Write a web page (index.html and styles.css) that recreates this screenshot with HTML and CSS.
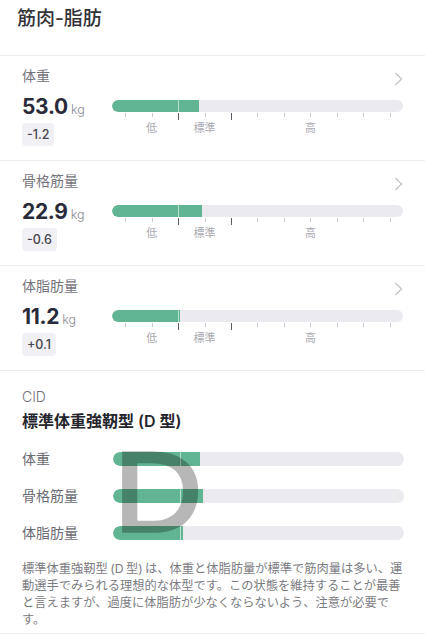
FILE: index.html
```html
<!DOCTYPE html>
<html lang="ja">
<head>
<meta charset="utf-8">
<title>筋肉-脂肪</title>
<link rel="stylesheet" href="styles.css">
</head>
<body>
<header class="page-head">
  <h1 class="page-title">筋肉-脂肪</h1>
</header>

<section class="metric">
  <div class="metric-head">
    <span class="metric-label">体重</span>
    <svg class="chev" width="9" height="14" viewBox="0 0 9 14"><polyline points="1.5,1 7.5,7 1.5,13"/></svg>
  </div>
  <div class="metric-body">
    <div class="metric-value">
      <div class="value"><span class="num">53.0</span><span class="unit">kg</span></div>
      <span class="delta">-1.2</span>
    </div>
    <div class="gauge">
      <div class="track"><div class="fill" style="width:29.9%"></div><div class="mark"></div></div>
      <div class="scale">
        <i class="tick"></i><i class="tick"></i><i class="tick long"></i><i class="tick"></i><i class="tick long"></i><i class="tick"></i><i class="tick"></i><i class="tick"></i><i class="tick"></i><i class="tick"></i><i class="tick"></i>
        <span class="lbl lbl-low">低</span><span class="lbl lbl-std">標準</span><span class="lbl lbl-high">高</span>
      </div>
    </div>
  </div>
</section>

<section class="metric">
  <div class="metric-head">
    <span class="metric-label">骨格筋量</span>
    <svg class="chev" width="9" height="14" viewBox="0 0 9 14"><polyline points="1.5,1 7.5,7 1.5,13"/></svg>
  </div>
  <div class="metric-body">
    <div class="metric-value">
      <div class="value"><span class="num">22.9</span><span class="unit">kg</span></div>
      <span class="delta">-0.6</span>
    </div>
    <div class="gauge">
      <div class="track"><div class="fill" style="width:30.9%"></div><div class="mark"></div></div>
      <div class="scale">
        <i class="tick"></i><i class="tick"></i><i class="tick long"></i><i class="tick"></i><i class="tick long"></i><i class="tick"></i><i class="tick"></i><i class="tick"></i><i class="tick"></i><i class="tick"></i><i class="tick"></i>
        <span class="lbl lbl-low">低</span><span class="lbl lbl-std">標準</span><span class="lbl lbl-high">高</span>
      </div>
    </div>
  </div>
</section>

<section class="metric">
  <div class="metric-head">
    <span class="metric-label">体脂肪量</span>
    <svg class="chev" width="9" height="14" viewBox="0 0 9 14"><polyline points="1.5,1 7.5,7 1.5,13"/></svg>
  </div>
  <div class="metric-body">
    <div class="metric-value">
      <div class="value"><span class="num">11.2</span><span class="unit">kg</span></div>
      <span class="delta">+0.1</span>
    </div>
    <div class="gauge">
      <div class="track"><div class="fill" style="width:23.3%"></div><div class="mark"></div></div>
      <div class="scale">
        <i class="tick"></i><i class="tick"></i><i class="tick long"></i><i class="tick"></i><i class="tick long"></i><i class="tick"></i><i class="tick"></i><i class="tick"></i><i class="tick"></i><i class="tick"></i><i class="tick"></i>
        <span class="lbl lbl-low">低</span><span class="lbl lbl-std">標準</span><span class="lbl lbl-high">高</span>
      </div>
    </div>
  </div>
</section>

<section class="cid">
  <div class="cid-kicker">CID</div>
  <h2 class="cid-title">標準体重強靭型 (D 型)</h2>
  <div class="cid-chart">
    <div class="cid-row"><span class="cid-label">体重</span><div class="track big"><div class="fill" style="width:30%"></div><div class="mark"></div></div></div>
    <div class="cid-row"><span class="cid-label">骨格筋量</span><div class="track big"><div class="fill" style="width:31%"></div><div class="mark"></div></div></div>
    <div class="cid-row"><span class="cid-label">体脂肪量</span><div class="track big"><div class="fill" style="width:24.1%"></div><div class="mark"></div></div></div>
    <span class="cid-letter">D</span>
  </div>
  <p class="cid-desc">標準体重強靭型 (D 型) は、体重と体脂肪量が標準で筋肉量は多い、運動選手でみられる理想的な体型です。この状態を維持することが最善と言えますが、過度に体脂肪が少なくならないよう、注意が必要です。</p>
</section>
</body>
</html>
```

FILE: styles.css
```css
* { box-sizing: border-box; }

html, body {
  margin: 0;
  padding: 0;
  background: #ffffff;
}

body {
  width: 425px;
  font-family: "Inter", "Noto Sans CJK JP", sans-serif;
  color: #2b2b33;
  overflow: hidden;
}

.page-head {
  height: 56px;
  padding: 6px 17px 0;
  border-bottom: 1px solid #eeeef1;
}

.page-title {
  margin: 0;
  font-size: 19px;
  line-height: 26px;
  font-weight: 500;
  color: #333338;
}

.metric {
  padding: 10px 22px 14px;
  border-bottom: 1px solid #eeeef1;
}

.metric-head {
  display: flex;
  justify-content: space-between;
  align-items: flex-start;
}

.metric-label {
  font-size: 14px;
  line-height: 20px;
  color: #75757c;
}

.chev {
  margin-top: 6px;
  fill: none;
  stroke: #c5c5ca;
  stroke-width: 1.3;
}

.metric-body {
  display: flex;
  margin-top: 11px;
}

.metric-value {
  width: 90px;
  flex: none;
  display: flex;
  flex-direction: column;
  align-items: flex-start;
}

.value {
  height: 20px;
  line-height: 20px;
  white-space: nowrap;
}

.num {
  font-size: 21px;
  font-weight: 700;
  color: #2a2b3a;
  letter-spacing: -0.3px;
}

.unit {
  margin-left: 3px;
  font-size: 12.5px;
  font-weight: 300;
  color: #8a8a92;
}

.delta {
  margin-top: 6px;
  height: 23px;
  padding: 0 5px;
  border-radius: 4px;
  background: #f1f1f5;
  font-size: 12.5px;
  line-height: 23px;
  font-weight: 500;
  color: #45454d;
}

.gauge {
  flex: 1;
  padding-top: 3px;
}

.track {
  position: relative;
  height: 12px;
  border-radius: 6px;
  background: #ebebef;
  overflow: hidden;
}

.track.big {
  height: 14px;
  border-radius: 7px;
}

.fill {
  height: 100%;
  background: #62b592;
  border-radius: 7px 0 0 7px;
}

.mark {
  position: absolute;
  top: 0;
  bottom: 0;
  left: 22.7%;
  width: 1px;
  background: rgba(255, 255, 255, 0.55);
}

.track.big .mark {
  left: 23.1%;
}

.scale {
  display: grid;
  grid-template-columns: repeat(11, 1fr);
  grid-template-rows: 8px auto;
}

.tick {
  grid-row: 1;
  position: relative;
}

.tick::before {
  content: "";
  position: absolute;
  left: 50%;
  top: 1px;
  width: 1px;
  height: 4px;
  background: #c9c9ce;
}

.tick.long::before {
  height: 7px;
  background: #5d5d66;
}

.lbl {
  grid-row: 2;
  margin-top: 1px;
  font-size: 11px;
  line-height: 14px;
  color: #a9a9b0;
  text-align: center;
  white-space: nowrap;
}

.lbl-low { grid-column: 2; }
.lbl-std { grid-column: 4; justify-self: center; }
.lbl-high { grid-column: 5 / 12; }

.cid {
  padding: 16px 20px 5px 22px;
  border-bottom: 1px solid #eeeef1;
}

.cid-kicker {
  font-size: 14px;
  line-height: 20px;
  font-weight: 300;
  color: #6f6f77;
}

.cid-title {
  margin: 3px 0 0;
  font-size: 16px;
  line-height: 22px;
  font-weight: 600;
  color: #25252c;
}

.cid-chart {
  position: relative;
  display: grid;
  row-gap: 17px;
  margin-top: 17px;
}

.cid-row {
  display: grid;
  grid-template-columns: 91px 1fr;
  align-items: center;
  height: 20px;
}

.cid-row .track {
  margin-right: 1px;
}

.cid-label {
  font-size: 14px;
  line-height: 20px;
  color: #6b6b73;
}

.cid-letter {
  position: absolute;
  left: 92px;
  top: -13px;
  font-family: "Liberation Sans", sans-serif;
  font-size: 113px;
  line-height: 113px;
  color: #000;
  -webkit-text-stroke: 3.5px #000;
  opacity: 0.28;
  transform: scaleX(1.08);
  transform-origin: left top;
  pointer-events: none;
}

.cid-desc {
  margin: 17px 0 0;
  font-size: 12.25px;
  line-height: 17px;
  word-spacing: -1px;
  color: #7b7b82;
}
```
